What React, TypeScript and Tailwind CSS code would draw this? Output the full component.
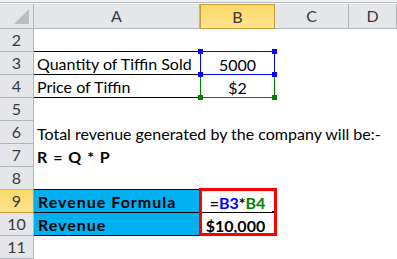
import type { ReactNode } from 'react'

type RowData = {
  n: number
  a?: ReactNode
}

// 헤더 공통 스타일
const headerCell = 'flex items-center justify-center border-r border-b border-[#b1b6bd] bg-[#e4e6ea] text-[#3a3a3a]'
const activeHeader = 'flex items-center justify-center bg-gradient-to-b from-[#f9d867] to-[#ffe48e] text-[#3a3a3a]'

function ColHeader({ label, active }: { label: string; active?: boolean }) {
  if (active) return <div className={`${activeHeader} border border-[#c99a3a]`}>{label}</div>
  return <div className={headerCell}>{label}</div>
}

function RowHeader({ n, active }: { n: number; active?: boolean }) {
  return <div className={active ? `${activeHeader} border-r border-b border-[#c99a3a]` : headerCell}>{n}</div>
}

/** 수식 참조 범위 박스 (모서리 핸들 포함) */
function RangeBox({ color, z }: { color: string; z: string }) {
  const handle = 'absolute size-[5px]'
  return (
    <div className={`pointer-events-none absolute -top-px inset-x-0 bottom-0 border ${z}`} style={{ borderColor: color }}>
      <span className={`${handle} -left-[3px] -top-[3px]`} style={{ background: color }} />
      <span className={`${handle} -right-[3px] -top-[3px]`} style={{ background: color }} />
      <span className={`${handle} -left-[3px] -bottom-[3px]`} style={{ background: color }} />
      <span className={`${handle} -right-[3px] -bottom-[3px]`} style={{ background: color }} />
    </div>
  )
}

export default function App() {
  const rows: RowData[] = [
    { n: 2 },
    { n: 3, a: 'Quantity of Tiffin Sold' },
    { n: 4, a: 'Price of Tiffin' },
    { n: 5 },
    { n: 6, a: 'Total revenue generated by the company will be:-' },
    { n: 7, a: <b className="tracking-[1px]">R = Q * P</b> },
    { n: 8 },
  ]

  return (
    <div className="h-[259px] w-[397px] overflow-hidden bg-white font-['Lato',sans-serif] text-[16px] text-black">
      {/* 리본 아래 얇은 구분선 */}
      <div className="h-[2px] bg-[#eef0f2]" />
      <div className="h-px bg-[#b9bdc3]" />
      <div className="h-px bg-white" />

      <div className="grid grid-cols-[34px_166px_75px_74px_1fr] grid-rows-[25px_repeat(10,23px)] leading-none">
        {/* 좌상단 전체선택 셀 */}
        <div className={`${headerCell} relative`}>
          <span className="absolute right-[4px] bottom-[4px] size-0 border-b-[15px] border-l-[15px] border-b-[#b9bdc2] border-l-transparent" />
        </div>
        <ColHeader label="A" />
        <ColHeader label="B" active />
        <ColHeader label="C" />
        <ColHeader label="D" />

        {rows.map((r) => (
          <Row key={r.n} row={r} />
        ))}

        {/* 9행: 수식 */}
        <RowHeader n={9} active />
        <div className="flex items-center border-r border-b border-black bg-[#00b0f0] pt-[2px] pl-[4px] font-bold tracking-[1px]">
          Revenue Formula
        </div>
        <div className="relative row-span-2 grid grid-rows-2">
          <div className="flex items-center justify-center border-b border-black pt-[3px] font-bold">
            =<span className="text-[#0000ff]">B3</span>*<span className="text-[#008000]">B4</span>
          </div>
          <div className="flex items-center justify-center pt-[2px] pr-[4px] font-bold">$10,000</div>
          <div className="pointer-events-none absolute -top-[2px] -left-px -right-[2px] bottom-0 border-[3px] border-[#ff0000]" />
          <span className="absolute top-[21px] right-[1px] size-[2px] bg-black" />
        </div>
        <div />
        <div />

        {/* 10행 */}
        <RowHeader n={10} />
        <div className="flex items-center border-r border-b border-black bg-[#00b0f0] pt-[2px] pl-[4px] font-bold tracking-[1px]">
          Revenue
        </div>
        <div />
        <div />

        {/* 11행 */}
        <RowHeader n={11} />
        <div />
        <div />
        <div />
        <div />
      </div>
    </div>
  )
}

function Row({ row }: { row: RowData }) {
  // 2~4행 A열 하단 테두리, 8행은 9행 위 테두리
  const aBorder = (row.n >= 2 && row.n <= 4) || row.n === 8 ? 'border-b border-black' : ''

  return (
    <>
      <RowHeader n={row.n} />
      <div className={`flex items-center whitespace-nowrap pt-[2px] pl-[3px] ${aBorder}`}>{row.a}</div>
      <div className="relative flex items-center justify-center pt-[2px]">
        {row.n === 3 && (
          <>
            5000
            <RangeBox color="#0000ff" z="z-20" />
          </>
        )}
        {row.n === 4 && (
          <>
            $2
            <RangeBox color="#008000" z="z-10" />
          </>
        )}
      </div>
      <div />
      <div />
    </>
  )
}
